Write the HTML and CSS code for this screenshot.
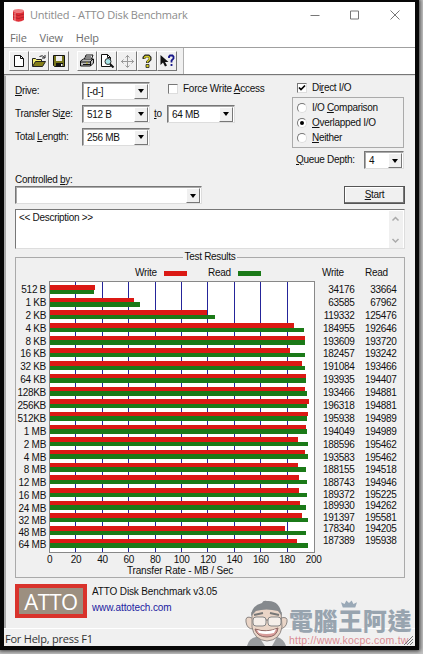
FILE: index.html
```
<!DOCTYPE html>
<html lang="en">
<head>
<meta charset="utf-8">
<title>Untitled - ATTO Disk Benchmark</title>
<link rel="stylesheet" href="styles.css">
</head>
<body>
<div class="frame">
<main class="window">
  <header class="titlebar">
    <svg class="app-icon" viewBox="0 0 13 15"><path d="M1 3v9q5.500 3.500 11 0V3z" fill="#df3038"/><ellipse cx="6.500" cy="3" rx="5.500" ry="2" fill="#ee7d80"/><path d="M1 6q5.500 3 11 0M1 9q5.500 3 11 0" fill="none" stroke="#a91825" stroke-width=".8"/><path d="M3 5v8" stroke="#f39a9b" stroke-width="1"/></svg>
    <span class="title">Untitled - ATTO Disk Benchmark</span>
    <svg class="caption" viewBox="0 0 90 10" fill="none" stroke="#777"><path d="M.5 5.500h9M40.500 1h8v8h-8zM80.500.5l9 9M89.500.5l-9 9"/></svg>
  </header>
  <nav class="menu"><span>File</span><span>View</span><span>Help</span></nav>
  <div class="toolbar">
    <div class="tools">
      <button><svg viewBox="0 0 16 14"><path d="M3.500 1.500h6l3 3v8h-9z" fill="#fff" stroke="#111"/><path d="M9.500 1.500v3h3" fill="none" stroke="#111"/></svg></button>
      <button><svg viewBox="0 0 16 14"><path d="M1.500 12V4.500h3l1 1h5v2" fill="#f4ee70" stroke="#222"/><path d="M1.500 12.500l3-5h10l-3 5z" fill="#857f18" stroke="#222"/><path d="M8.500 2.500q3-2 5 1M14 1v3h-3" fill="none" stroke="#222"/></svg></button>
      <button><svg viewBox="0 0 16 14"><path d="M2.500 1.500h11v11h-10l-1-1z" fill="#77751a" stroke="#111"/><path d="M5 2h6v5H5z" fill="#eee"/><path d="M5 9h7v4H5z" fill="#111"/><path d="M10 10h1.500v2H10z" fill="#eee"/></svg></button>
      <button class="gap"><svg viewBox="0 0 16 14"><path d="M5.500 5l1.500-4h7l-1.500 4" fill="#fff" stroke="#111"/><path d="M1.500 7l3-2h10v4l-3 3h-10z" fill="#bbb" stroke="#111"/><path d="M2 8h9l3-3M4 10.500h7M7 3h5M11.500 8v4" fill="none" stroke="#111"/><path d="M7 9h2" stroke="#ada515"/></svg></button>
      <button><svg viewBox="0 0 16 14"><path d="M2.500.5h6l3 3v9h-9z" fill="#fff" stroke="#111"/><path d="M8.500.5v3h3" fill="none" stroke="#111"/><circle cx="9" cy="7.500" r="3" fill="#a8e4e7" stroke="#333"/><path d="M11 10l3.500 3.500" stroke="#111" stroke-width="2"/></svg></button>
      <button><svg viewBox="0 0 16 14" fill="none" stroke="#999"><path d="M8.500 1v12M2 7.500h13"/><path d="M6.500 3.500l2-2 2 2M6.500 11.500l2 2 2-2M4.500 5.500l-2 2 2 2M12.500 5.500l2 2-2 2"/></svg></button>
      <button><svg viewBox="0 0 16 14"><path d="M5 5V3.500L6.500 2h3L11 3.500v2L8.500 8v1" fill="none" stroke="#222" stroke-width="3"/><path d="M5.500 4.500v-1l1-1h3l1 1v2L8.500 7.500v1" fill="none" stroke="#d7cf24" stroke-width="1.500"/><path d="M7 10.500h3v3H7z" fill="#d7cf24" stroke="#222" stroke-width=".8"/></svg></button>
      <button><svg viewBox="0 0 16 14"><path d="M1.500 1v10l2.500-2.500 2 4 2-1-2-3.500h3.500z" fill="#111"/><path d="M10 4V2.500L11 1.500h2.500l1 1v2L12.500 6.500v2M12.500 10v2" fill="none" stroke="#17178a" stroke-width="1.800"/></svg></button>
    </div>
  </div>

  <section class="body">
    <div class="settings">
      <div class="left">
        <div class="row"><label><u>D</u>rive:</label><div class="combo"><span>[-d-]</span><i></i></div>
          <span class="check force"><b></b><span class="t-force">Force Write <u>A</u>ccess</span></span></div>
        <div class="row"><label>Transfer Si<u>z</u>e:</label><div class="combo"><span>512 B</span><i></i></div><span class="to"><u>t</u>o</span><div class="combo"><span>64 MB</span><i></i></div></div>
        <div class="row"><label>Total <u>L</u>ength:</label><div class="combo"><span>256 MB</span><i></i></div></div>
      </div>
      <div class="right">
        <span class="check direct"><b><svg viewBox="0 0 8 8"><path d="M1 3.500l2 2 4-4" fill="none" stroke="#000" stroke-width="1.700"/></svg></b><span>Di<u>r</u>ect I/O</span></span>
        <div class="radios">
          <span class="radio"><b></b><span>I/O <u>C</u>omparison</span></span>
          <span class="radio on"><b></b><span><u>O</u>verlapped I/O</span></span>
          <span class="radio"><b></b><span><u>N</u>either</span></span>
        </div>
        <div class="queue"><span><u>Q</u>ueue Depth:</span><div class="combo small"><span>4</span><i></i></div></div>
      </div>
    </div>
    <div class="control-label">Controlled <u>b</u>y:</div>
    <div class="control"><div class="combo wide"><span></span><i></i></div><button class="start"><u>S</u>tart</button></div>
    <div class="description"><span>&lt;&lt; Description &gt;&gt;</span>
      <svg class="scroll" viewBox="0 0 14 37" fill="none" stroke="#aaa" stroke-width="1.500"><path d="M3.500 9.500l3-3 3 3M3.500 28l3 3 3-3"/></svg></div>

    <fieldset class="results">
      <legend>Test Results</legend>
      <div class="key"><span class="k-write">Write</span><i class="red"></i><span class="k-read">Read</span><i class="green"></i><span class="h-write">Write</span><span class="h-read">Read</span></div>
      <div class="chart">
        <div class="names" id="names"></div>
        <div class="plot" id="plot"></div>
        <div class="values" id="write"></div>
        <div class="values read" id="read"></div>
      </div>
      <div class="axis"><span>0</span><span>20</span><span>40</span><span>60</span><span>80</span><span>100</span><span>120</span><span>140</span><span>160</span><span>180</span><span>200</span></div>
      <div class="axis-title">Transfer Rate - MB / Sec</div>
    </fieldset>

    <footer class="about"><div class="atto">ATTO</div><div class="about-text"><span>ATTO Disk Benchmark v3.05</span><a>www.attotech.com</a></div></footer>
  </section>
  <div class="status">For Help, press F1</div>
</main>
</div>
<div class="watermark">
  <svg class="face" viewBox="0 0 44 46">
    <path d="M2 46q2-8 9-9h21q7 2 9 9z" fill="#999c9f"/>
    <path d="M14 37l6 9h7l5-9z" fill="#eee"/>
    <path d="M7 18Q0 15 1 22t7 7M36 18q7-2 6 4t-7 7" fill="#ead5c7" stroke="#8d8784"/>
    <path d="M7 12Q20 0 36 12l1 15q-2 13-15 14Q9 40 7 27z" fill="#ead5c7" stroke="#8d8784"/>
    <path d="M6 16Q7 5 17 3q1-3 5-2 13-1 15 15l-4-5q-12-3-22 0z" fill="#85898d"/>
    <path d="M9 15l9-2M25 13l9 2" stroke="#777" stroke-width="2"/>
    <rect x="8" y="17" width="13" height="9" rx="3" fill="#f5eee9" stroke="#858585"/><rect x="23" y="17" width="13" height="9" rx="3" fill="#f5eee9" stroke="#858585"/>
    <path d="M21 20h2" stroke="#777"/><path d="M10 29q12 4 23-1-1 9-11 9t-12-8z" fill="#d79b98" stroke="#8d6965"/><path d="M12 30q10 3 19-1l-2 4q-8 2-15 0z" fill="#fff"/>
  </svg>
  <div class="brand"><strong>電腦王阿達</strong><span>http://www.kocpc.com.tw</span></div>
  <svg class="crown" viewBox="0 0 18 8"><path d="M2 8L0 2l4 2 2-4 3 3 3-3 2 4 4-2-2 6z" fill="#9aa9b7"/></svg>
  <svg class="grip" viewBox="0 0 10 10"><path d="M1 10l9-9M4 10l6-6M7 10l3-3" stroke="#777"/></svg>
</div>
<script src="chart.js"></script>
</body>
</html>
```
FILE: styles.css
```
* { box-sizing: border-box; }
body { margin: 0; width: 423px; height: 654px; overflow: hidden; position: relative; background: #c4c4c4; font: 10px/12px "Liberation Sans", sans-serif; letter-spacing: -.3px; color: #111; white-space: nowrap; }
.frame { width: 419px; height: 650px; padding: 2px 4px 4px; background: #080808; box-shadow: 0 0 4px 1px #333; }
.window { width: 411px; height: 644px; background: #fff; display: flex; flex-direction: column; }
u { text-decoration-thickness: 1px; text-underline-offset: 1px; }
button { padding: 0; font: inherit; letter-spacing: inherit; color: inherit; }

.titlebar { height: 26px; display: flex; align-items: center; padding: 0 15px 0 8px; font: 11px/16px "Open Sans", sans-serif; color: #8c8c8c; letter-spacing: -.22px; }
.app-icon { width: 13px; height: 15px; margin-right: 5px; }
.caption { width: 90px; height: 10px; margin-left: auto; }
.menu { height: 19px; display: flex; gap: 13px; padding-left: 6px; font: 11px/20px "Open Sans", sans-serif; letter-spacing: -.2px; color: #6d6d6d; }
.toolbar { height: 28px; border-top: 1px solid #a0a0a0; border-bottom: 1px solid #777; }
.tools { width: 180px; height: 26px; background: #f0f0f0; border-right: 1px solid #b0b0b0; display: flex; padding: 3px 0 3px 5px; }
.tools button { width: 20px; height: 20px; border: 1px solid; border-color: #fff #777 #777 #fff; background: #f0f0f0; display: flex; align-items: center; justify-content: center; }
.tools svg { width: 16px; height: 14px; flex: none; }
.tools .gap { margin-left: 8px; }

.body { height: 553px; background: #f0f0f0; border-left: 2px solid #aaa; border-top: 1px solid #ddd; padding: 6px 10px 0 9px; }
.settings { height: 92px; display: flex; }
.left { width: 277px; display: flex; flex-direction: column; gap: 6px; }
.row { height: 17px; display: flex; align-items: center; }
.row label { width: 67px; }
.combo { width: 68px; height: 18px; flex: none; border: 1px solid; border-color: #777 #ddd #ddd #777; box-shadow: inset 1px 1px #aaa; background: #fff; display: flex; justify-content: space-between; padding: 1px; line-height: 16px; }
.combo span { padding-left: 3px; }
.combo i { width: 14px; height: 15px; background: #f0f0f0; border: 1px solid; border-color: #fff #777 #777 #fff; display: flex; align-items: center; justify-content: center; }
.combo i::before { content: ""; border: 3px solid transparent; border-top: 4px solid #000; border-bottom: 0; }
.to { width: 17px; padding-left: 4px; }
.check { display: flex; align-items: center; gap: 5px; }
.check b { width: 10px; height: 10px; background: #fff; border: 1px solid; border-color: #777 #ddd #ddd #777; }
.check svg { display: block; width: 8px; height: 8px; }
.force { margin: -4px 0 0 18px; letter-spacing: -.25px; }
.right { width: 112px; }
.direct { height: 12px; padding-left: 5px; }
.radios { height: 51px; margin-top: 3px; border: 1px solid #aaa; padding: 2px 0 0 4px; }
.radio { height: 15px; display: flex; align-items: center; gap: 5px; }
.radio b { width: 10px; height: 10px; border: 1px solid; border-color: #777 #ddd #ddd #777; border-radius: 50%; background: #fff; display: flex; align-items: center; justify-content: center; }
.radio.on b::before { content: ""; width: 4px; height: 4px; border-radius: 50%; background: #000; }
.queue { display: flex; justify-content: space-between; align-items: center; padding-left: 4px; margin-top: 3px; }
.small { width: 40px; }
.control-label { height: 12px; }
.control { height: 18px; display: flex; justify-content: space-between; }
.wide { width: 187px; }
.start { width: 61px; height: 18px; border: 1px solid #555; background: #f0f0f0; box-shadow: inset -1px -1px #777, inset 1px 1px #fff; }
.description { height: 40px; margin-top: 5px; display: flex; justify-content: space-between; background: #fff; border: 1px solid; border-color: #777 #ddd #ddd #777; padding: 1px; }
.description > span { padding: 1px 0 0 2px; }
.scroll { width: 14px; height: 37px; background: #f0f0f0; }

.results { height: 327px; margin: 2px 0 0; padding: 0; border: 1px solid #aaa; min-width: 0; }
.results legend { height: 12px; margin: 0 auto; padding: 0 2px; }
.key { height: 12px; margin-top: 4px; display: flex; align-items: center; }
.key i { width: 23px; height: 5px; }
.red { background: #db1914; }
.green { background: #1b7a18; }
.k-write { width: 29px; margin-left: 119px; }
.k-read { width: 30px; margin-left: 21px; }
.h-write { margin-left: 61px; width: 43px; }
.chart { height: 272px; margin-top: 2px; display: flex; }
.names { width: 33px; text-align: right; padding-right: 3px; padding-top: 3px; }
.names div, .values div { height: 12.900px; line-height: 12.900px; }
.names .tight { height: 11.850px; line-height: 11.850px; }
.values .tight { height: 11.500px; line-height: 11.500px; }
.plot { width: 265.500px; height: 272px; border: 1px solid #888; padding-top: 3px; background: repeating-linear-gradient(90deg, transparent 0 25.400px, #25259a 25.400px 26.400px) 0 0 / 250px 100% no-repeat #fff; }
.pair { height: 12.700px; }
.pair i { display: block; height: 4.500px; }
.values { width: 40px; padding-top: 3px; text-align: right; }
.values.read { width: 42px; }
.axis { height: 13px; margin-left: 20.500px; display: flex; padding-top: 1px; }
.axis span { width: 26.400px; text-align: center; flex: none; }
.axis-title { margin-left: 111px; margin-top: -1px; letter-spacing: -.17px; }
.about { display: flex; margin-top: 6px; }
.atto { width: 72px; height: 34px; border: 4px solid #d9332c; background: #9c8f80; color: #fff; font: 22px/27px "Open Sans", sans-serif; letter-spacing: -.4px; text-align: center; }
.about-text { display: flex; flex-direction: column; gap: 4px; padding: 2px 0 0 5px; letter-spacing: -.14px; }
.about a { color: #1b1ba0; letter-spacing: -.1px; }
.status { height: 18px; background: #f0f0f0; border-top: 1px solid #fff; padding-left: 1px; font: 11px/20px "Open Sans", sans-serif; letter-spacing: -.22px; color: #333; }

.watermark { position: absolute; left: 245px; top: 600px; display: flex; width: 170px; height: 46px; }
.face { width: 44px; height: 46px; flex: none; }
.brand { display: flex; flex-direction: column; padding-top: 6px; }
.brand strong { font: 900 24px/28px "Noto Sans CJK TC", sans-serif; letter-spacing: .6px; color: #98a4af; }
.brand span { font: 10.500px/13px "Liberation Sans", sans-serif; letter-spacing: .2px; color: #da8b92; }
.crown { position: absolute; left: 96px; top: 0; width: 16px; height: 8px; }
.grip { position: absolute; right: 2px; bottom: 1px; width: 10px; height: 10px; }
```
FILE: chart.js
```
const rows = [
  ["512 B", 34176, 33664], ["1 KB", 63585, 67962], ["2 KB", 119332, 125476],
  ["4 KB", 184955, 192646], ["8 KB", 193609, 193720], ["16 KB", 182457, 193242],
  ["32 KB", 191084, 193466], ["64 KB", 193935, 194407], ["128KB", 193466, 194881],
  ["256KB", 196318, 194881], ["512KB", 195938, 194989], ["1 MB", 194049, 194989],
  ["2 MB", 188596, 195462], ["4 MB", 193583, 195462], ["8 MB", 188155, 194518],
  ["12 MB", 188743, 194946], ["16 MB", 189372, 195225], ["24 MB", 189930, 194262],
  ["32 MB", 191397, 195581], ["48 MB", 178340, 194205], ["64 MB", 187389, 195938]
];

function add(id, text, tight) {
  const cell = document.createElement("div");
  cell.textContent = text;
  if (tight) cell.className = "tight";
  document.getElementById(id).append(cell);
}

rows.forEach(([name, write, read], i) => {
  add("names", name, i > 16);
  add("write", write, i > 14);
  add("read", read, i > 14);
  const pair = document.createElement("div");
  pair.className = "pair";
  [["red", write], ["green", read]].forEach(([color, value]) => {
    const bar = document.createElement("i");
    bar.className = color;
    bar.style.width = value / 2000 + "%";
    pair.append(bar);
  });
  document.getElementById("plot").append(pair);
});
```
